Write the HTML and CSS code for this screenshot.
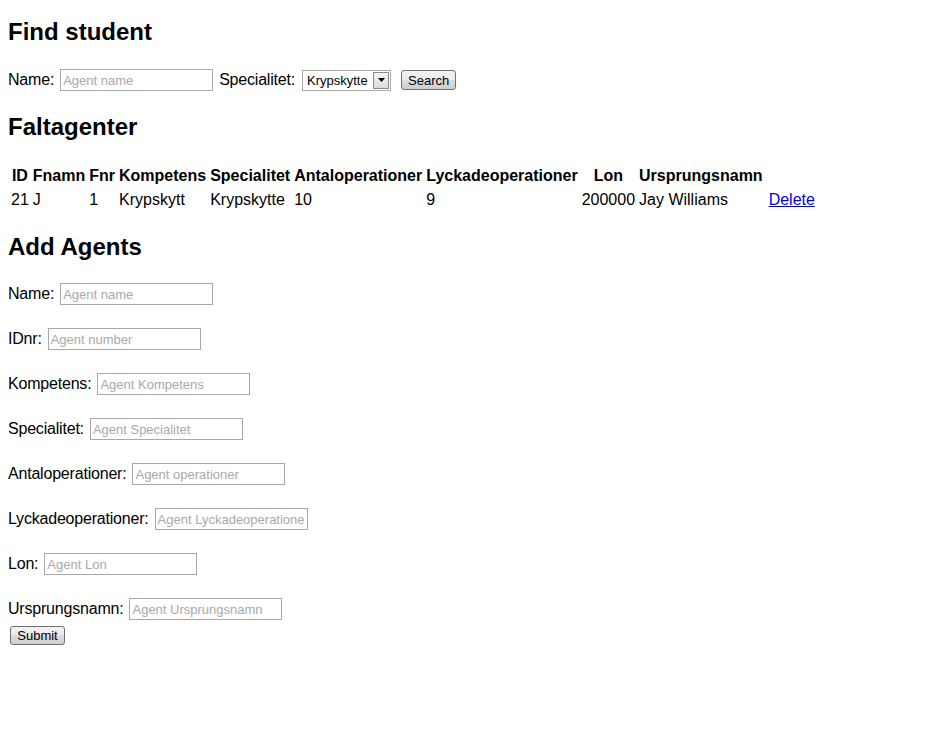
FILE: index.html
```html
<!DOCTYPE html>
<html>
<head>
<meta charset="utf-8">
<title>Agents</title>
<link rel="stylesheet" href="styles.css">
</head>
<body>
<h2 class="title title-first">Find student</h2>
<form class="search-row">
  <label class="lbl">Name:</label>
  <input class="field" type="text" placeholder="Agent name">
  <label class="lbl lbl-spec">Specialitet:</label>
  <span class="select">
    <span class="select-text">Krypskytte</span>
    <span class="select-btn"><svg width="7" height="4" viewBox="0 0 7 4"><path d="M0 0h7L3.5 4z" fill="#000"/></svg></span>
  </span>
  <button class="btn btn-search" type="button">Search</button>
</form>

<h2 class="title">Faltagenter</h2>
<table class="agents">
  <tr>
    <th>ID</th><th>Fnamn</th><th>Fnr</th><th>Kompetens</th><th>Specialitet</th><th>Antaloperationer</th><th>Lyckadeoperationer</th><th>Lon</th><th>Ursprungsnamn</th><th></th>
  </tr>
  <tr>
    <td>21</td><td>J</td><td class="c-fnr">1</td><td>Krypskytt</td><td>Krypskytte</td><td>10</td><td>9</td><td>200000</td><td>Jay Williams</td><td class="c-del"><a href="#">Delete</a></td>
  </tr>
</table>

<h2 class="title">Add Agents</h2>
<form class="add-form">
  <div class="row"><label class="lbl">Name:</label><input class="field" type="text" placeholder="Agent name"></div>
  <div class="row"><label class="lbl">IDnr:</label><input class="field" type="text" placeholder="Agent number"></div>
  <div class="row"><label class="lbl">Kompetens:</label><input class="field" type="text" placeholder="Agent Kompetens"></div>
  <div class="row"><label class="lbl">Specialitet:</label><input class="field" type="text" placeholder="Agent Specialitet"></div>
  <div class="row"><label class="lbl">Antaloperationer:</label><input class="field" type="text" placeholder="Agent operationer"></div>
  <div class="row"><label class="lbl">Lyckadeoperationer:</label><input class="field" type="text" placeholder="Agent Lyckadeoperationer"></div>
  <div class="row"><label class="lbl">Lon:</label><input class="field" type="text" placeholder="Agent Lon"></div>
  <div class="row row-last"><label class="lbl">Ursprungsnamn:</label><input class="field" type="text" placeholder="Agent Ursprungsnamn"></div>
  <button class="btn btn-submit" type="button">Submit</button>
</form>
</body>
</html>
```
FILE: styles.css
```css
html, body {
  margin: 0;
  padding: 0;
  background: #fff;
}
body {
  padding: 0 8px;
  font-family: "Liberation Sans", Arial, sans-serif;
  font-size: 16px;
  color: #000;
}
.title {
  font-size: 24px;
  font-weight: bold;
  line-height: 28px;
  margin: 0;
  padding: 0;
}
.title-first {
  padding-top: 18px;
}
.search-row {
  display: flex;
  align-items: center;
  margin: 23px 0 22px 0;
  height: 22px;
}
.lbl {
  font-size: 16px;
  line-height: 20px;
  white-space: nowrap;
  letter-spacing: -0.2px;
}
.field {
  box-sizing: border-box;
  width: 153px;
  height: 22px;
  margin: 0 0 0 6px;
  padding: 1px 2px;
  border: 1px solid #a9a9a9;
  font-family: "Liberation Sans", Arial, sans-serif;
  font-size: 13px;
  color: #000;
  background: #fff;
  outline: none;
}
.field::placeholder {
  color: #a9a9a9;
  opacity: 1;
}
.lbl-spec {
  margin-left: 6px;
}
.select {
  box-sizing: border-box;
  display: inline-flex;
  align-items: center;
  width: 89px;
  height: 21px;
  margin-left: 7px;
  border: 1px solid #a9a9a9;
  background: #fff;
  font-size: 13px;
  padding: 1px;
}
.select-text {
  flex: 1;
  padding-left: 3px;
  line-height: 17px;
}
.select-btn {
  box-sizing: border-box;
  width: 16px;
  height: 17px;
  display: flex;
  align-items: center;
  justify-content: center;
  background: linear-gradient(#f4f4f4, #dcdcdc);
  border: 1px solid #8a8a8a;
}
.btn {
  box-sizing: border-box;
  height: 20px;
  padding: 0 6px;
  font-family: "Liberation Sans", Arial, sans-serif;
  font-size: 13px;
  color: #000;
  border: 1px solid #707070;
  border-radius: 3px;
  background: linear-gradient(#f2f2f2, #ebebeb 50%, #dddddd 50%, #cfcfcf);
  cursor: default;
}
.btn-search {
  margin-left: 10px;
  width: 55px;
}
.agents {
  border-collapse: separate;
  border-spacing: 2px;
  margin: 22px 0 20px 0;
  font-size: 16px;
}
.agents th, .agents td {
  padding: 1px;
  line-height: 20px;
  white-space: nowrap;
}
.agents th {
  font-weight: bold;
  text-align: center;
}
.agents td {
  text-align: left;
}
.agents td.c-del {
  padding-left: 3px;
}
.agents a {
  color: #0000ee;
  text-decoration: underline;
}
.add-form {
  margin-top: 22px;
}
.row {
  display: flex;
  align-items: center;
  height: 22px;
  margin-bottom: 23px;
}
.row-last {
  margin-bottom: 6px;
}
.btn-submit {
  display: block;
  margin-left: 2px;
  width: 55px;
  height: 19px;
}
```
